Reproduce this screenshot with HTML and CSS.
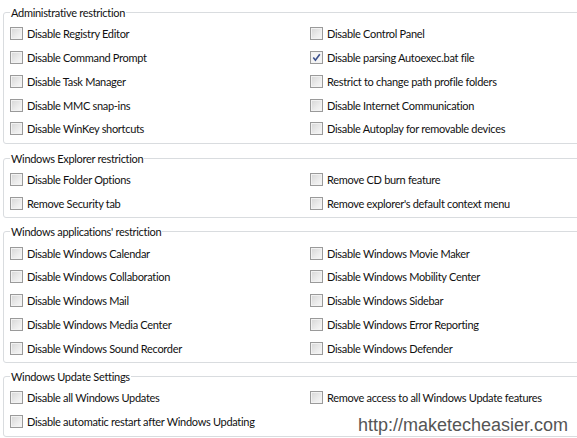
FILE: index.html
```html
<!DOCTYPE html>
<html>
<head>
<meta charset="utf-8">
<link rel="stylesheet" href="styles.css">
</head>
<body>
<div class="page">
  <fieldset class="group first">
    <legend class="title">Administrative restriction</legend>
    <div class="grid">
      <label class="item"><span class="box"></span>Disable Registry Editor</label>
      <label class="item"><span class="box"></span>Disable Control Panel</label>
      <label class="item"><span class="box"></span>Disable Command Prompt</label>
      <label class="item"><span class="box checked"><svg viewBox="0 0 9 9" width="9" height="9"><path d="M1.3 4.6 L3.4 7.2 L7.8 1.2" fill="none" stroke="#3a4f8c" stroke-width="1.6"/></svg></span>Disable parsing Autoexec.bat file</label>
      <label class="item"><span class="box"></span>Disable Task Manager</label>
      <label class="item"><span class="box"></span>Restrict to change path profile folders</label>
      <label class="item"><span class="box"></span>Disable MMC snap-ins</label>
      <label class="item"><span class="box"></span>Disable Internet Communication</label>
      <label class="item"><span class="box"></span>Disable WinKey shortcuts</label>
      <label class="item"><span class="box"></span>Disable Autoplay for removable devices</label>
    </div>
  </fieldset>
  <fieldset class="group">
    <legend class="title">Windows Explorer restriction</legend>
    <div class="grid">
      <label class="item"><span class="box"></span>Disable Folder Options</label>
      <label class="item"><span class="box"></span>Remove CD burn feature</label>
      <label class="item"><span class="box"></span>Remove Security tab</label>
      <label class="item"><span class="box"></span>Remove explorer's default context menu</label>
    </div>
  </fieldset>
  <fieldset class="group">
    <legend class="title">Windows applications' restriction</legend>
    <div class="grid">
      <label class="item"><span class="box"></span>Disable Windows Calendar</label>
      <label class="item"><span class="box"></span>Disable Windows Movie Maker</label>
      <label class="item"><span class="box"></span>Disable Windows Collaboration</label>
      <label class="item"><span class="box"></span>Disable Windows Mobility Center</label>
      <label class="item"><span class="box"></span>Disable Windows Mail</label>
      <label class="item"><span class="box"></span>Disable Windows Sidebar</label>
      <label class="item"><span class="box"></span>Disable Windows Media Center</label>
      <label class="item"><span class="box"></span>Disable Windows Error Reporting</label>
      <label class="item"><span class="box"></span>Disable Windows Sound Recorder</label>
      <label class="item"><span class="box"></span>Disable Windows Defender</label>
    </div>
  </fieldset>
  <fieldset class="group">
    <legend class="title">Windows Update Settings</legend>
    <div class="grid">
      <label class="item"><span class="box"></span>Disable all Windows Updates</label>
      <label class="item"><span class="box"></span>Remove access to all Windows Update features</label>
      <label class="item"><span class="box"></span>Disable automatic restart after Windows Updating</label>
    </div>
  </fieldset>
  <div class="watermark">http://maketecheasier.com</div>
</div>
</body>
</html>
```
FILE: styles.css
```css
html, body {
  margin: 0;
  padding: 0;
  background: #ffffff;
}
.page {
  position: relative;
  width: 577px;
  height: 438px;
  overflow: hidden;
  padding-top: 5px;
  box-sizing: border-box;
  font-family: "Lato", "Open Sans", sans-serif;
  font-size: 11px;
  letter-spacing: -0.3px;
  color: #111;
}
.group {
  margin: 0 -10px 6px 3px;
  padding: 2px 0 2px 6px;
  border: 1px solid #d9dcdf;
  border-radius: 3px;
  min-width: 0;
}
.group.first {
  margin-bottom: 7px;
}
.title {
  padding: 0 1px;
  line-height: 15px;
  color: #111;
}
.grid {
  display: grid;
  grid-template-columns: 300px 1fr;
  grid-auto-rows: 23.75px;
}
.item {
  display: flex;
  align-items: center;
  gap: 4px;
  white-space: nowrap;
}
.box {
  width: 11px;
  height: 11px;
  border: 1px solid #9a9a9a;
  background: linear-gradient(135deg, #d6d6d6 0%, #ececec 60%, #f8f8f8 100%);
  box-shadow: inset 0 0 0 1px #f2f2f2;
  display: flex;
  align-items: center;
  justify-content: center;
  flex: none;
}
.box.checked {
  background: #f4f4f4;
}
.watermark {
  position: absolute;
  right: 9px;
  bottom: 2px;
  font-family: "Liberation Sans", Arial, sans-serif;
  font-size: 18px;
  letter-spacing: 0;
  color: #555;
}
```
